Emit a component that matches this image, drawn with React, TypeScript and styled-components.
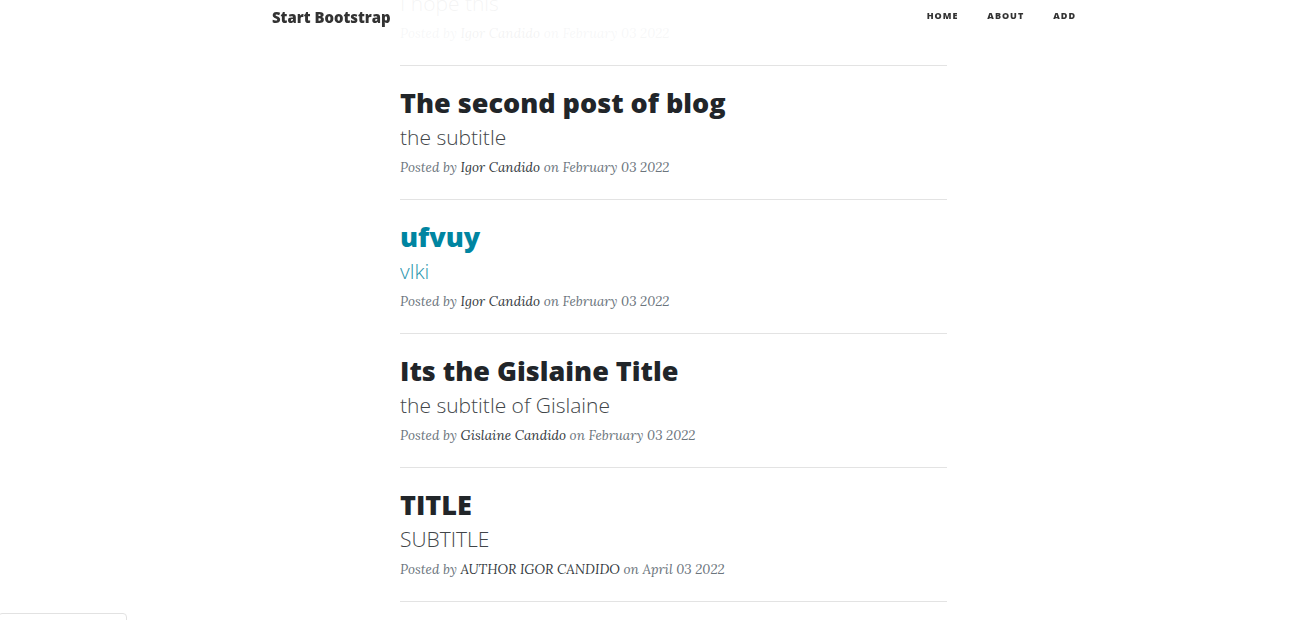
import React from "react";
import styled, { createGlobalStyle } from "styled-components";

const GlobalStyle = createGlobalStyle`
  html, body { margin: 0; padding: 0; background: #fff; }
  body {
    font-family: "Lora", "Liberation Serif", serif;
    color: #212529;
    overflow: hidden;
    height: 620px;
  }
`;

const Page = styled.div`
  padding-left: 40px;
`;

const NavBar = styled.nav`
  position: fixed;
  top: 0;
  left: 0;
  right: 0;
  height: 48px;
  padding-left: 40px;
  background: rgba(255, 255, 255, 0.94);
  z-index: 10;
`;

const NavInner = styled.div`
  width: 803px;
  margin: 0 auto;
  display: flex;
  align-items: center;
  justify-content: space-between;
  height: 34px;
`;

const Brand = styled.a`
  font-family: "Open Sans", sans-serif;
  font-weight: 800;
  font-size: 14.9px;
  color: #333;
  text-decoration: none;
`;

const NavLinks = styled.ul`
  list-style: none;
  margin: 0 -1px 3px 0;
  padding: 0;
  display: flex;
  gap: 29px;
`;

const NavLink = styled.a`
  display: block;
  font-family: "Open Sans", sans-serif;
  font-weight: 800;
  font-size: 9px;
  line-height: 12px;
  letter-spacing: 1px;
  text-transform: uppercase;
  color: #333;
  text-decoration: none;
`;

const Column = styled.main`
  width: 547px;
  margin: -68px auto 0;
`;

const PostLink = styled.a<{ $hover?: boolean }>`
  display: block;
  text-decoration: none;
  color: ${(p) => (p.$hover ? "#0085a1" : "#212529")};
`;

const Post = styled.article`
  padding: 19px 0 20px;
`;

const Title = styled.h2`
  font-family: "Open Sans", sans-serif;
  font-weight: 800;
  font-size: 27px;
  line-height: 36px;
  margin: 0 0 2px;
`;

const Subtitle = styled.h3`
  font-family: "Open Sans", sans-serif;
  font-weight: 300;
  font-size: 21px;
  line-height: 28px;
  margin: 0 0 3px;
  opacity: 0.85;
`;

const Meta = styled.p`
  font-family: "Lora", "Liberation Serif", serif;
  font-style: italic;
  font-size: 13.5px;
  line-height: 24px;
  color: #6c757d;
  margin: 0;
  padding-top: 1px;
`;

const Author = styled.a`
  color: #343a40;
  text-decoration: none;
`;

const Divider = styled.hr`
  border: 0;
  border-top: 1px solid #e3e3e3;
  margin: 0;
  height: 0;
`;

const CornerTab = styled.div`
  position: fixed;
  left: -2px;
  bottom: -20px;
  width: 127px;
  height: 25px;
  border: 1px solid #e2e2e2;
  border-radius: 4px;
  background: #fff;
`;

type PostData = {
  title: string;
  subtitle: string;
  author: string;
  date: string;
  hover?: boolean;
};

const posts: PostData[] = [
  { title: "The first post", subtitle: "I hope this", author: "Igor Candido", date: "February 03 2022" },
  { title: "The second post of blog", subtitle: "the subtitle", author: "Igor Candido", date: "February 03 2022" },
  { title: "ufvuy", subtitle: "vlki", author: "Igor Candido", date: "February 03 2022", hover: true },
  { title: "Its the Gislaine Title", subtitle: "the subtitle of Gislaine", author: "Gislaine Candido", date: "February 03 2022" },
  { title: "TITLE", subtitle: "SUBTITLE", author: "AUTHOR IGOR CANDIDO", date: "April 03 2022" },
];

export default function App() {
  return (
    <Page>
      <GlobalStyle />
      <NavBar>
        <NavInner>
          <Brand href="#">Start Bootstrap</Brand>
          <NavLinks>
            <li><NavLink href="#">Home</NavLink></li>
            <li><NavLink href="#">About</NavLink></li>
            <li><NavLink href="#">Add</NavLink></li>
          </NavLinks>
        </NavInner>
      </NavBar>
      <Column>
        {posts.map((p, i) => (
          <React.Fragment key={i}>
            <Post>
              <PostLink href="#" $hover={p.hover}>
                <Title>{p.title}</Title>
                <Subtitle>{p.subtitle}</Subtitle>
              </PostLink>
              <Meta>
                Posted by <Author href="#">{p.author}</Author> on {p.date}
              </Meta>
            </Post>
            <Divider />
          </React.Fragment>
        ))}
      </Column>
      <CornerTab />
    </Page>
  );
}
